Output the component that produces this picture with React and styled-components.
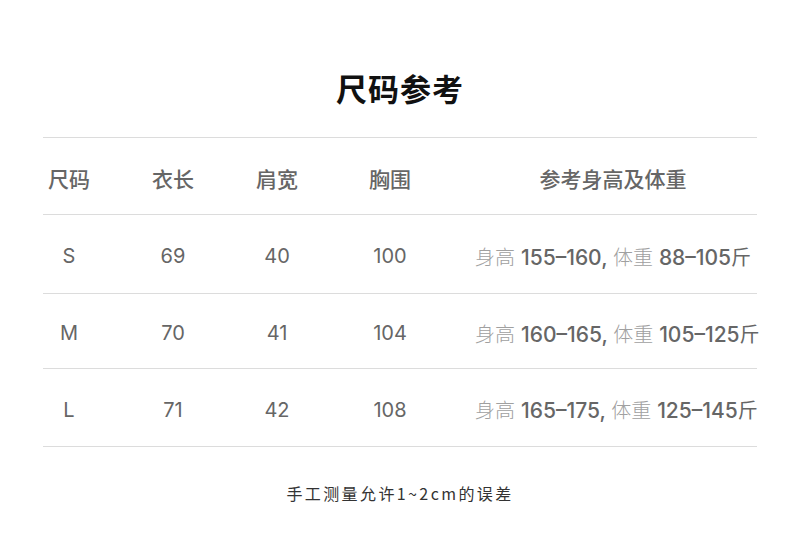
import React from 'react';
import styled, { createGlobalStyle } from 'styled-components';

const GlobalStyle = createGlobalStyle`
  html, body {
    margin: 0;
    padding: 0;
    background: #fff;
  }
  body {
    font-family: "Noto Sans CJK SC", "Noto Sans", sans-serif;
  }
`;

const Page = styled.div`
  width: 800px;
  height: 557px;
  padding-top: 66px;
  box-sizing: border-box;
  display: flex;
  flex-direction: column;
  align-items: center;
`;

const Title = styled.h1`
  margin: 0;
  height: 44px;
  font-size: 31px;
  line-height: 44px;
  font-weight: 700;
  color: #111;
  letter-spacing: 1px;
`;

const Table = styled.div`
  margin-top: 27px;
  width: 714px;
  border-top: 1px solid #dcdcdc;
`;

const Row = styled.div`
  display: grid;
  grid-template-columns: 52px 156px 52px 174px 1fr;
  height: ${(p) => p.$h}px;
  align-items: center;
  border-bottom: 1px solid #dcdcdc;
  padding-top: 4px;
  box-sizing: border-box;
`;

const Cell = styled.div`
  text-align: center;
  white-space: nowrap;
  font-size: ${(p) => (p.$head ? 21 : 20)}px;
  color: #666;
  font-weight: ${(p) => (p.$head ? 500 : 400)};
  font-family: ${(p) =>
    p.$head ? '"Noto Sans CJK SC", sans-serif' : 'Inter, "Noto Sans CJK SC", sans-serif'};
`;

const Ref = styled.div`
  white-space: nowrap;
  font-size: 21px;
  color: #666;
  font-family: Inter, "Noto Sans CJK SC", sans-serif;
  text-align: ${(p) => (p.$head ? 'center' : 'left')};
  font-weight: 500;
  margin-left: ${(p) => (p.$head ? '-8px' : '-2px')};
`;

const Light = styled.span`
  color: ${(p) => (p.$dark ? '#666' : '#a0a0a0')};
  font-size: 20px;
  font-family: "Noto Sans CJK SC", sans-serif;
  font-weight: ${(p) => (p.$dark ? 400 : 300)};
  margin-right: ${(p) => (p.$gap ? '6px' : '0')};
`;

const Note = styled.p`
  margin: 34px 0 0;
  font-size: 16px;
  color: #333;
  letter-spacing: 2.4px;
  font-family: "Noto Sans CJK SC", sans-serif;
`;

const rows = [
  { size: 'S', len: 69, sh: 40, ch: 100, h: '155–160', w: '88–105', hgt: 79 },
  { size: 'M', len: 70, sh: 41, ch: 104, h: '160–165', w: '105–125', hgt: 75 },
  { size: 'L', len: 71, sh: 42, ch: 108, h: '165–175', w: '125–145', hgt: 78 },
];

export default function App() {
  return (
    <>
      <GlobalStyle />
      <Page>
        <Title>尺码参考</Title>
        <Table>
          <Row $h={77}>
            <Cell $head>尺码</Cell>
            <Cell $head>衣长</Cell>
            <Cell $head>肩宽</Cell>
            <Cell $head>胸围</Cell>
            <Ref $head>参考身高及体重</Ref>
          </Row>
          {rows.map((r) => (
            <Row key={r.size} $h={r.hgt}>
              <Cell>{r.size}</Cell>
              <Cell>{r.len}</Cell>
              <Cell>{r.sh}</Cell>
              <Cell>{r.ch}</Cell>
              <Ref>
                <Light $gap>身高</Light>
                {r.h}, <Light $gap>体重</Light>
                {r.w}
                <Light $dark>斤</Light>
              </Ref>
            </Row>
          ))}
        </Table>
        <Note>手工测量允许1~2cm的误差</Note>
      </Page>
    </>
  );
}
